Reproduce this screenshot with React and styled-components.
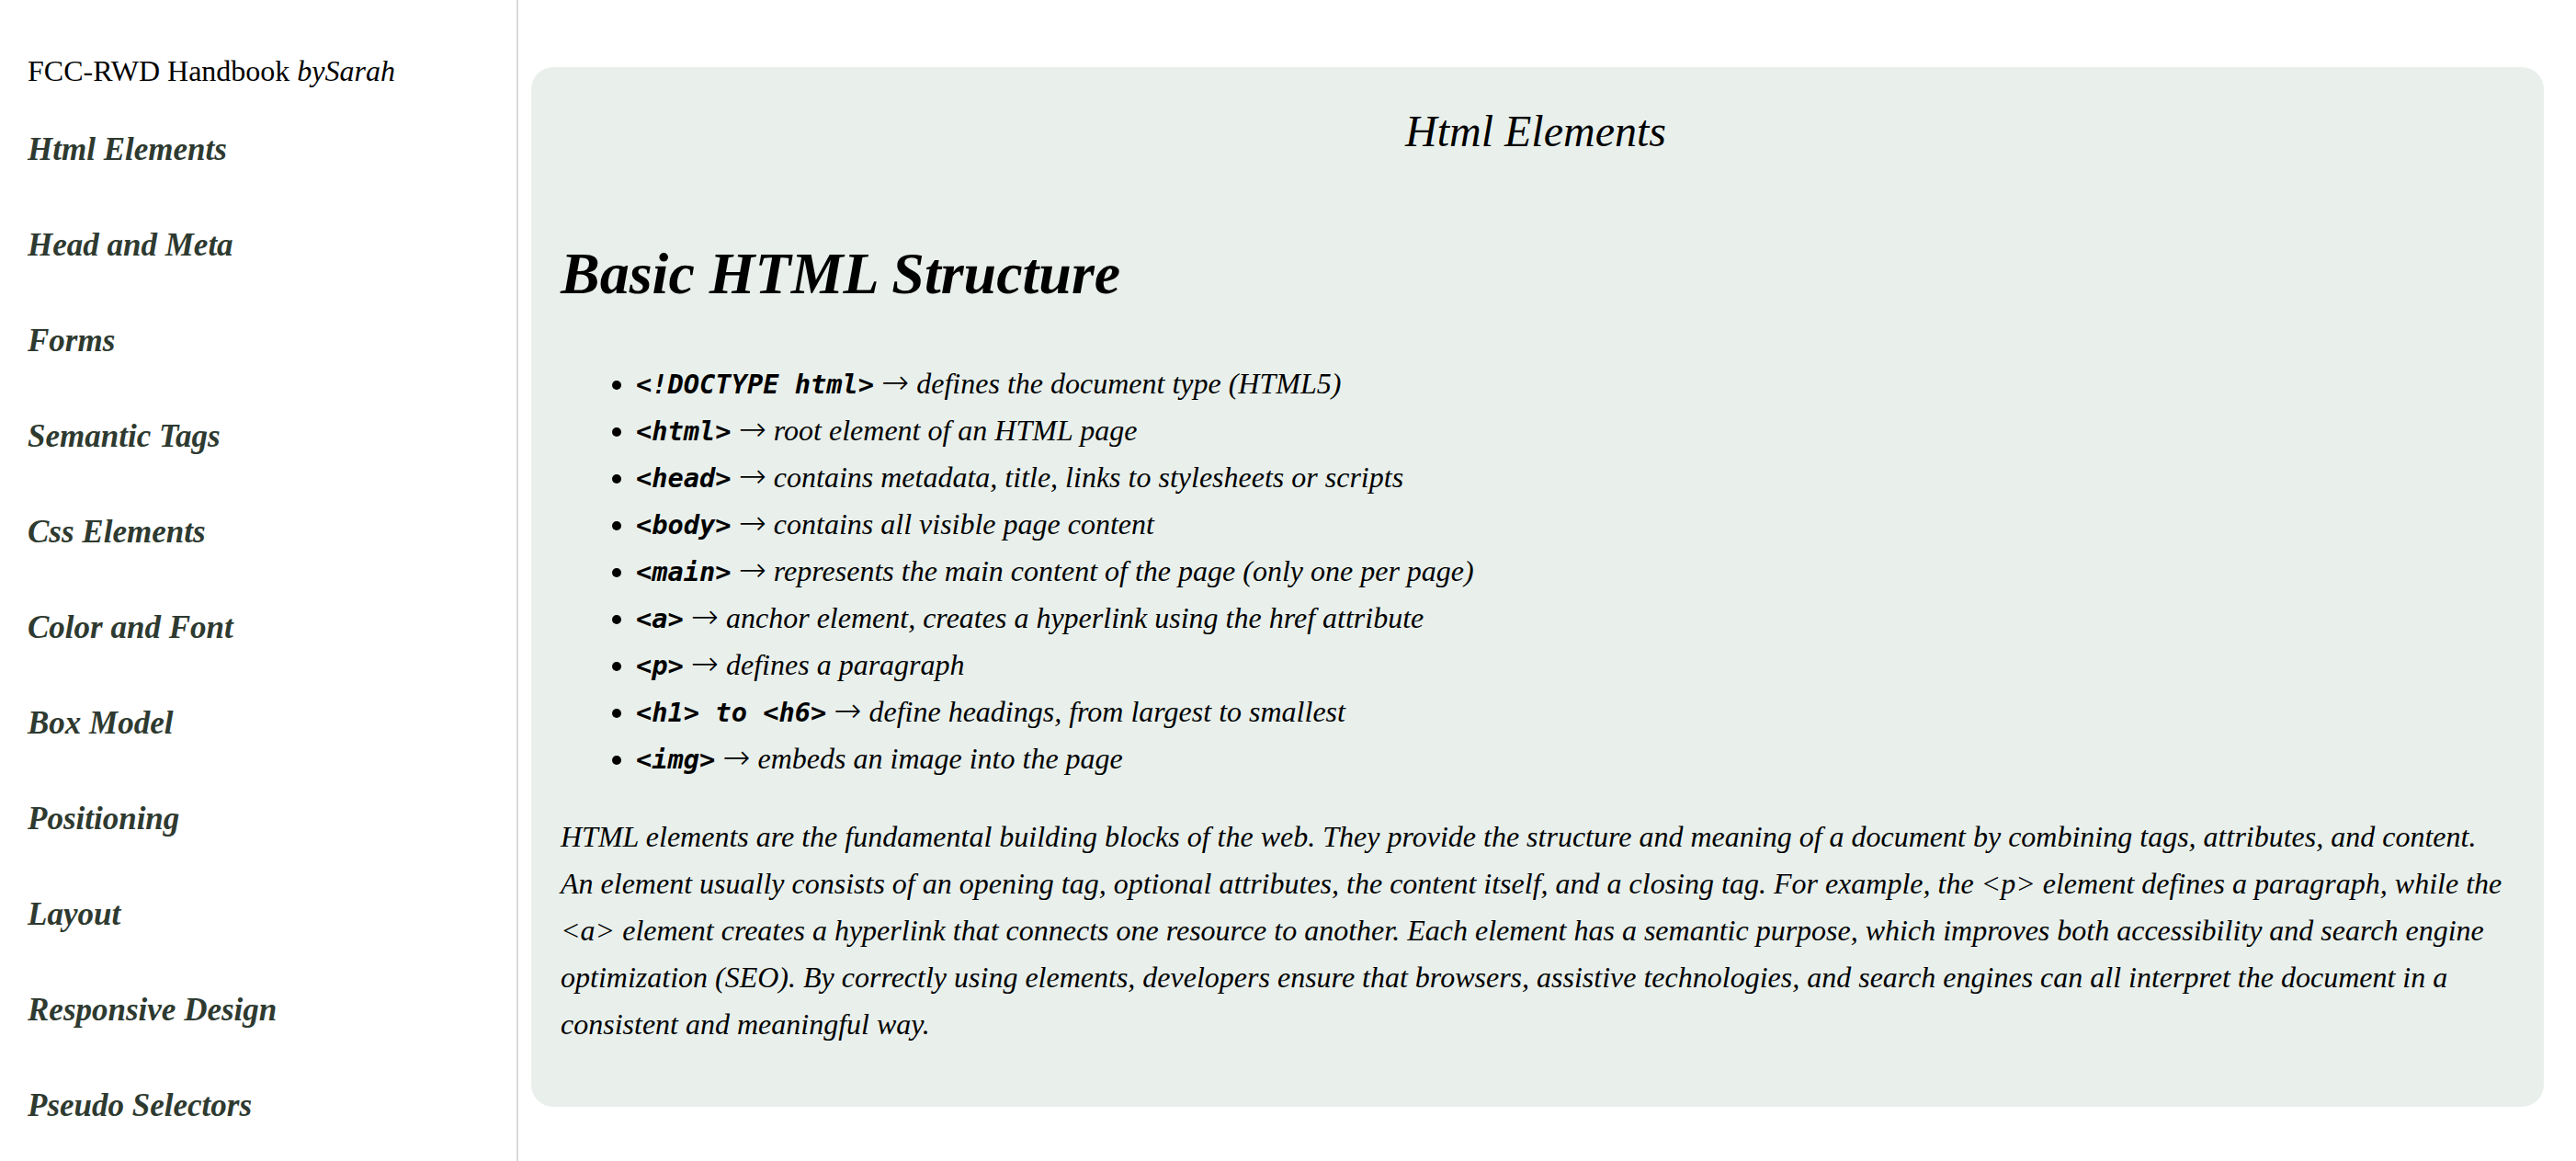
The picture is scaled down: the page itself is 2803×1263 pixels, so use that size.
import React from "react";
import styled, { createGlobalStyle } from "styled-components";

const GlobalStyle = createGlobalStyle`
  html, body {
    margin: 0;
    padding: 0;
    background: #fff;
    font-family: "Liberation Serif", "Times New Roman", serif;
    color: #000;
  }
`;

const Page = styled.div`
  display: flex;
  min-height: 100vh;
`;

const Sidebar = styled.nav`
  width: 532px;
  flex-shrink: 0;
  min-height: 100vh;
  padding: 59px 0 0 30px;
  border-right: 2px solid #d8d8d8;
  display: flex;
  flex-direction: column;
  box-sizing: content-box;
`;

const Brand = styled.header`
  font-size: 32px;
  line-height: 36px;
  margin-bottom: 47px;
`;

const NavList = styled.ul`
  list-style: none;
  margin: 0;
  padding: 0;
  display: flex;
  flex-direction: column;
  gap: 62px;
`;

const NavLink = styled.a`
  display: block;
  font-size: 35px;
  line-height: 42px;
  font-weight: bold;
  font-style: italic;
  color: #2e3a30;
  text-decoration: none;
`;

const Main = styled.main`
  flex: 1;
  padding: 73px 35px 0 14px;
`;

const Card = styled.section`
  background: #e9f0ec;
  border-radius: 24px;
  padding: 42px 36px 64px 32px;
`;

const CardTitle = styled.h2`
  margin: 0;
  text-align: center;
  font-size: 48px;
  line-height: 55px;
  font-weight: normal;
  font-style: italic;
`;

const Heading = styled.h1`
  margin: 92px 0 0;
  font-size: 64px;
  line-height: 71px;
  font-weight: bold;
  font-style: italic;
`;

const TagList = styled.ul`
  margin: 59px 0 0;
  padding-left: 82px;
  font-size: 32px;
  line-height: 51px;
  font-style: italic;
`;

const Code = styled.code`
  font-family: "DejaVu Sans Mono", monospace;
  font-size: 28.7px;
  line-height: 1;
  font-weight: bold;
  font-style: oblique;
`;

const Arrow = styled.span`
  font-family: "DejaVu Sans", sans-serif;
  font-style: normal;
  font-weight: 200;
  font-size: 36px;
  line-height: 1;
`;

const Text = styled.p`
  margin: 34px 0 0;
  font-size: 32px;
  line-height: 51px;
  font-style: italic;
`;

const topics = [
  "Html Elements",
  "Head and Meta",
  "Forms",
  "Semantic Tags",
  "Css Elements",
  "Color and Font",
  "Box Model",
  "Positioning",
  "Layout",
  "Responsive Design",
  "Pseudo Selectors",
];

const tags = [
  ["<!DOCTYPE html>", "defines the document type (HTML5)"],
  ["<html>", "root element of an HTML page"],
  ["<head>", "contains metadata, title, links to stylesheets or scripts"],
  ["<body>", "contains all visible page content"],
  ["<main>", "represents the main content of the page (only one per page)"],
  ["<a>", "anchor element, creates a hyperlink using the href attribute"],
  ["<p>", "defines a paragraph"],
  ["<h1> to <h6>", "define headings, from largest to smallest"],
  ["<img>", "embeds an image into the page"],
];

export default function App() {
  return (
    <>
      <GlobalStyle />
      <Page>
        <Sidebar>
          <Brand>
            FCC-RWD Handbook <i>bySarah</i>
          </Brand>
          <NavList>
            {topics.map((t) => (
              <li key={t}>
                <NavLink href="#">{t}</NavLink>
              </li>
            ))}
          </NavList>
        </Sidebar>
        <Main>
          <Card>
            <CardTitle>Html Elements</CardTitle>
            <Heading>Basic HTML Structure</Heading>
            <TagList>
              {tags.map(([code, desc]) => (
                <li key={code}>
                  <Code>{code}</Code> <Arrow>→</Arrow> {desc}
                </li>
              ))}
            </TagList>
            <Text>
              HTML elements are the fundamental building blocks of the web. They provide the structure and
              meaning of a document by combining tags, attributes, and content. An element usually consists of
              an opening tag, optional attributes, the content itself, and a closing tag. For example, the
              &lt;p&gt; element defines a paragraph, while the &lt;a&gt; element creates a hyperlink that
              connects one resource to another. Each element has a semantic purpose, which improves both
              accessibility and search engine optimization (SEO). By correctly using elements, developers ensure
              that browsers, assistive technologies, and search engines can all interpret the document in a
              consistent and meaningful way.
            </Text>
          </Card>
        </Main>
      </Page>
    </>
  );
}
